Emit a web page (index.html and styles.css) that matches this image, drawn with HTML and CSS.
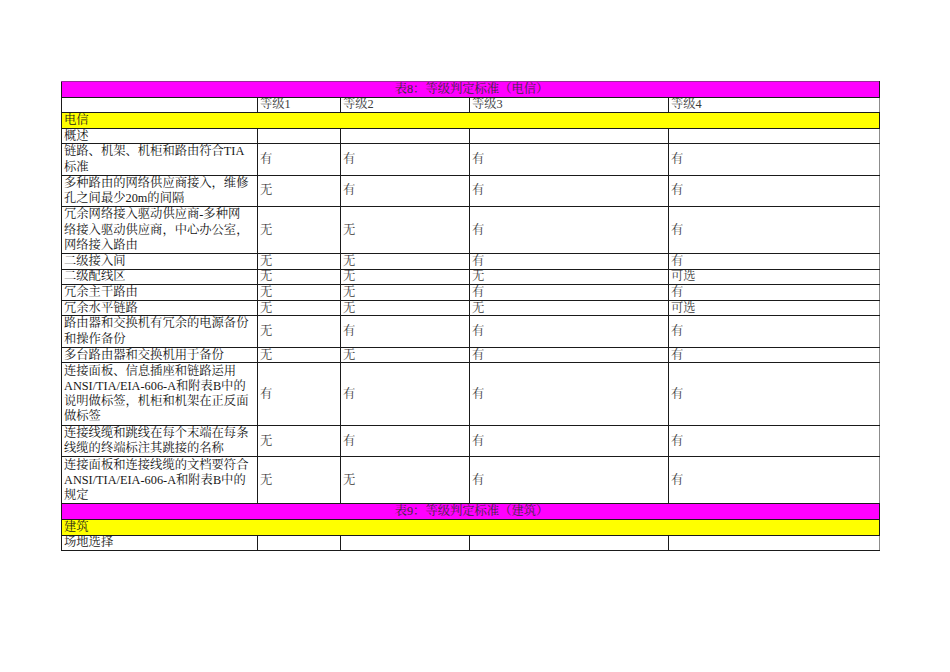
FILE: index.html
```html
<!DOCTYPE html>
<html lang="zh-CN">
<head>
<meta charset="utf-8">
<title>等级判定标准</title>
<link rel="stylesheet" href="styles.css">
</head>
<body>
<div class="page">
<table class="sheet">
  <colgroup>
    <col class="c1"><col class="c2"><col class="c3"><col class="c4"><col class="c5">
  </colgroup>
  <tbody>
    <tr class="r1 title"><td colspan="5">表8：等级判定标准（电信）</td></tr>
    <tr class="r1 head"><td></td><td class="v">等级1</td><td class="v">等级2</td><td class="v">等级3</td><td class="v">等级4</td></tr>
    <tr class="r1 section"><td colspan="5">电信</td></tr>
    <tr class="r1"><td>概述</td><td class="v"></td><td class="v"></td><td class="v"></td><td class="v"></td></tr>
    <tr class="r2"><td>链路、机架、机柜和路由符合TIA<br>标准</td><td class="v">有</td><td class="v">有</td><td class="v">有</td><td class="v">有</td></tr>
    <tr class="r2"><td>多种路由的网络供应商接入，维修<br>孔之间最少20m的间隔</td><td class="v">无</td><td class="v">有</td><td class="v">有</td><td class="v">有</td></tr>
    <tr class="r3"><td>冗余网络接入驱动供应商-多种网<br>络接入驱动供应商，中心办公室，<br>网络接入路由</td><td class="v">无</td><td class="v">无</td><td class="v">有</td><td class="v">有</td></tr>
    <tr class="r1"><td>二级接入间</td><td class="v">无</td><td class="v">无</td><td class="v">有</td><td class="v">有</td></tr>
    <tr class="r1"><td>二级配线区</td><td class="v">无</td><td class="v">无</td><td class="v">无</td><td class="v">可选</td></tr>
    <tr class="r1"><td>冗余主干路由</td><td class="v">无</td><td class="v">无</td><td class="v">有</td><td class="v">有</td></tr>
    <tr class="r1"><td>冗余水平链路</td><td class="v">无</td><td class="v">无</td><td class="v">无</td><td class="v">可选</td></tr>
    <tr class="r2"><td>路由器和交换机有冗余的电源备份<br>和操作备份</td><td class="v">无</td><td class="v">有</td><td class="v">有</td><td class="v">有</td></tr>
    <tr class="r1"><td>多台路由器和交换机用于备份</td><td class="v">无</td><td class="v">无</td><td class="v">有</td><td class="v">有</td></tr>
    <tr class="r4"><td>连接面板、信息插座和链路运用<br>ANSI/TIA/EIA-606-A和附表B中的<br>说明做标签，机柜和机架在正反面<br>做标签</td><td class="v">有</td><td class="v">有</td><td class="v">有</td><td class="v">有</td></tr>
    <tr class="r2"><td>连接线缆和跳线在每个末端在每条<br>线缆的终端标注其跳接的名称</td><td class="v">无</td><td class="v">有</td><td class="v">有</td><td class="v">有</td></tr>
    <tr class="r3"><td>连接面板和连接线缆的文档要符合<br>ANSI/TIA/EIA-606-A和附表B中的<br>规定</td><td class="v">无</td><td class="v">无</td><td class="v">有</td><td class="v">有</td></tr>
    <tr class="r1 title"><td colspan="5">表9：等级判定标准（建筑）</td></tr>
    <tr class="r1 section"><td colspan="5">建筑</td></tr>
    <tr class="r1"><td>场地选择</td><td class="v"></td><td class="v"></td><td class="v"></td><td class="v"></td></tr>
  </tbody>
</table>
</div>
</body>
</html>
```

FILE: styles.css
```css
html, body {
  margin: 0;
  padding: 0;
  background: #ffffff;
}

.page {
  padding: 81px 0 0 61px;
}

.sheet {
  border-collapse: collapse;
  table-layout: fixed;
  width: 818px;
  font-family: "Liberation Serif", "Noto Serif CJK SC", "Noto Sans CJK SC", serif;
  font-size: 12.3px;
  line-height: 13px;
  color: #151515;
}

.c1 { width: 196px; }
.c2 { width: 83px; }
.c3 { width: 129px; }
.c4 { width: 199px; }
.c5 { width: 211px; }

.sheet td {
  border: 1px solid #1a1a1a;
  padding: 0 0 0 2px;
  vertical-align: middle;
  white-space: nowrap;
  overflow: hidden;
}

.sheet td:nth-child(2),
.sheet td:nth-child(5) {
  border-left-color: #8c8c8c;
}

.sheet td:nth-child(5) {
  border-right-color: #8c8c8c;
}

.sheet td.v {
  color: #3a3a3a;
}

.r1 { height: 15.6px; }
.r2 { height: 31.3px; }
.r3 { height: 46.9px; }
.r4 { height: 62.6px; }

.r2 td:first-child,
.r3 td:first-child,
.r4 td:first-child {
  line-height: 15.2px;
}

.title td {
  background: #ff00ff;
  text-align: center;
  color: #3a2a3a;
  border-color: #9a2a9a #1a1a1a #1a1a1a #1a1a1a;
}

.section td {
  background: #ffff00;
  color: #1a1a1a;
}

.head td.v {
  color: #3a3a3a;
}
```
